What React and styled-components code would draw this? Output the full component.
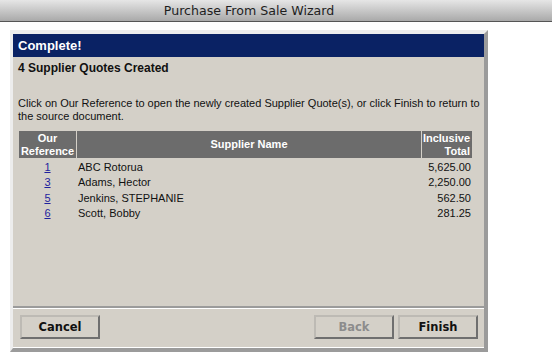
import styled, { createGlobalStyle } from "styled-components";

const GlobalStyle = createGlobalStyle`
    html, body {
        margin: 0;
        padding: 0;
        background: #ffffff;
    }
    body {
        font-family: "Liberation Sans", Arial, sans-serif;
    }
`;

const TitleBar = styled.div`
    height: 21px;
    border-bottom: 1px solid #555555;
    background: linear-gradient(#e6e6e6, #a9a9a9);
    display: flex;
    align-items: center;
    justify-content: center;
    padding-right: 54px;
    font-family: "DejaVu Sans", "Lucida Grande", sans-serif;
    font-size: 12.6px;
    color: #1e1e1e;
`;

const Panel = styled.div`
    box-sizing: border-box;
    width: 478px;
    height: 322px;
    margin: 8px 0 0 10px;
    border-style: solid;
    border-width: 4px 4px 4px 3px;
    border-color: #ededed #9b9b9b #9b9b9b #ededed;
    background: #d4d0c8;
    display: flex;
    flex-direction: column;
`;

const Banner = styled.div`
    height: 23px;
    background: #0a2264;
    color: #ffffff;
    font-weight: bold;
    font-size: 13px;
    display: flex;
    align-items: center;
    padding-left: 5px;
`;

const Body = styled.div`
    flex: 1;
    padding: 4px 0 0 5px;
    color: #111111;
`;

const Heading = styled.div`
    font-weight: bold;
    font-size: 12px;
    line-height: 14px;
`;

const Note = styled.p`
    margin: 22px 0 0;
    font-size: 11px;
    line-height: 13px;
`;

const Grid = styled.div`
    width: 453px;
    margin: 8px 0 0 1px;
    display: grid;
    grid-template-columns: 57px 1fr 50px;
    column-gap: 1px;
`;

const HeadCell = styled.div`
    background: #6c6c6c;
    color: #ffffff;
    font-weight: bold;
    font-size: 11px;
    line-height: 12.5px;
    height: 27px;
    margin-bottom: 2px;
    box-sizing: border-box;
    padding: 1px 2px;
    display: flex;
    align-items: center;
    justify-content: ${(p) => (p.$align === "right" ? "flex-end" : "center")};
    text-align: ${(p) => p.$align || "center"};
`;

const Cell = styled.div`
    font-size: 11px;
    line-height: 15.4px;
    padding: 0 1px;
    text-align: ${(p) => p.$align || "left"};
`;

const RefLink = styled.a`
    color: #1f1f9e;
    text-decoration: underline;
`;

const Footer = styled.div`
    height: 42px;
    box-sizing: border-box;
    border-top: 2px solid #9b9b9b;
    box-shadow: inset 0 1px 0 #ffffff, inset 0 -1px 0 #ffffff;
    padding: 7px 6px 0 7px;
    display: flex;
    gap: 4px;
`;

const Spacer = styled.div`
    flex: 1;
`;

const Button = styled.button`
    box-sizing: border-box;
    width: 80px;
    height: 24px;
    background: #d4d0c8;
    border: 2px solid;
    border-color: #bdbab4 #6f6f6f #6f6f6f #bdbab4;
    font-family: "DejaVu Sans", Verdana, sans-serif;
    font-weight: bold;
    font-size: 11.5px;
    color: ${(p) => (p.disabled ? "#8c8c8c" : "#111111")};
    padding: 0;
`;

const quotes = [
    { ref: "1", name: "ABC Rotorua", total: "5,625.00" },
    { ref: "3", name: "Adams, Hector", total: "2,250.00" },
    { ref: "5", name: "Jenkins, STEPHANIE", total: "562.50" },
    { ref: "6", name: "Scott, Bobby", total: "281.25" },
];

export default function App() {
    return (
        <>
            <GlobalStyle />
            <TitleBar>Purchase From Sale Wizard</TitleBar>
            <Panel>
                <Banner>Complete!</Banner>
                <Body>
                    <Heading>4 Supplier Quotes Created</Heading>
                    <Note>
                        Click on Our Reference to open the newly created Supplier
                        Quote(s), or click Finish to return to the source document.
                    </Note>
                    <Grid>
                        <HeadCell>
                            Our
                            <br />
                            Reference
                        </HeadCell>
                        <HeadCell>Supplier Name</HeadCell>
                        <HeadCell $align="right">
                            Inclusive
                            <br />
                            Total
                        </HeadCell>
                        {quotes.flatMap((q) => [
                            <Cell key={q.ref + "r"} $align="center">
                                <RefLink href="#">{q.ref}</RefLink>
                            </Cell>,
                            <Cell key={q.ref + "n"}>{q.name}</Cell>,
                            <Cell key={q.ref + "t"} $align="right">
                                {q.total}
                            </Cell>,
                        ])}
                    </Grid>
                </Body>
                <Footer>
                    <Button>Cancel</Button>
                    <Spacer />
                    <Button disabled>Back</Button>
                    <Button>Finish</Button>
                </Footer>
            </Panel>
        </>
    );
}
